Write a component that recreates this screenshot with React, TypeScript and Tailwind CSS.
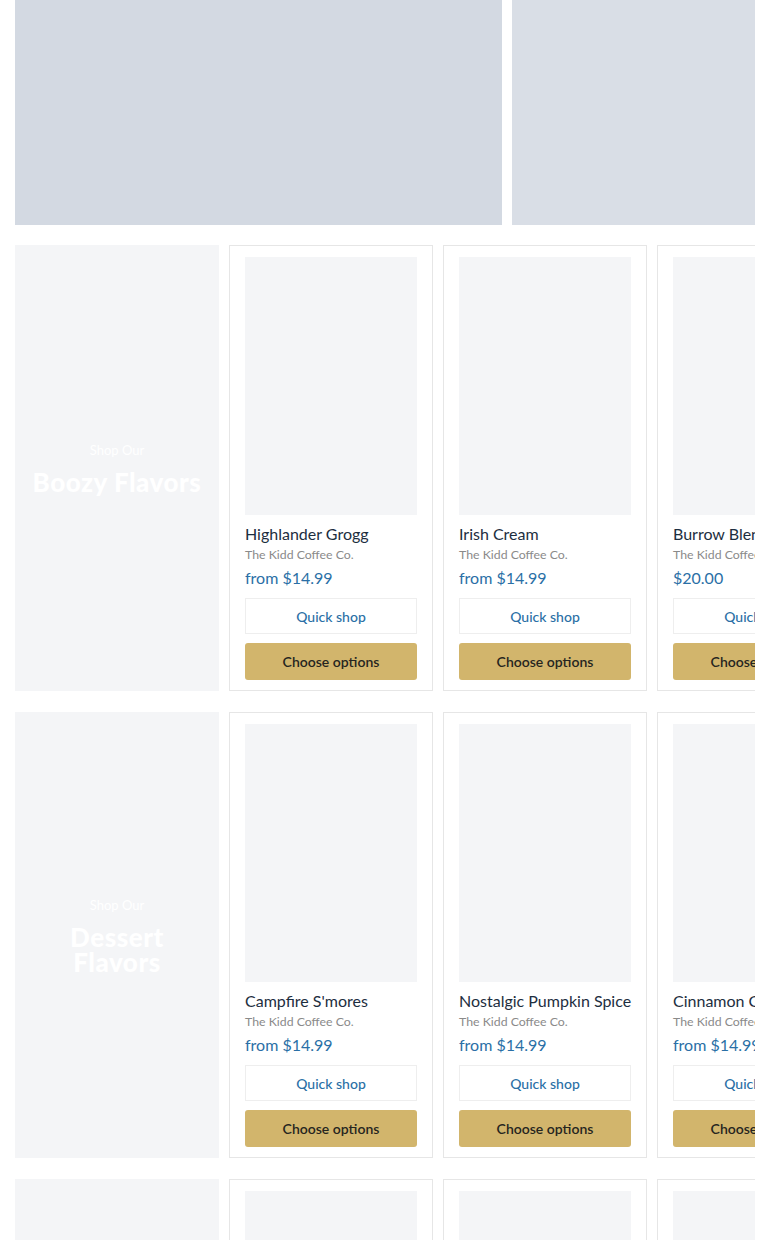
const font = { fontFamily: 'Lato, "Noto Sans", sans-serif' };

type Product = { title: string; price: string };

const rows: { heading: string; products: Product[] }[] = [
  {
    heading: 'Boozy Flavors',
    products: [
      { title: 'Highlander Grogg', price: 'from $14.99' },
      { title: 'Irish Cream', price: 'from $14.99' },
      { title: 'Burrow Blend', price: '$20.00' },
    ],
  },
  {
    heading: 'Dessert Flavors',
    products: [
      { title: "Campfire S'mores", price: 'from $14.99' },
      { title: 'Nostalgic Pumpkin Spice', price: 'from $14.99' },
      { title: 'Cinnamon Coffee Cake', price: 'from $14.99' },
    ],
  },
  {
    heading: 'Fruity Flavors',
    products: [
      { title: 'Blueberry Cobbler', price: 'from $14.99' },
      { title: 'Raspberry Truffle', price: 'from $14.99' },
      { title: 'Georgia Peach', price: 'from $14.99' },
    ],
  },
];

function ProductCard({ product }: { product: Product }) {
  return (
    <div className="w-[204px] shrink-0 border border-[#e6e6e6] bg-white px-[15px] pt-[11px] pb-[10px]">
      <div className="h-[258px] bg-[#f4f5f7]" />
      <div className="mt-[9px] text-[16px] leading-[20px] text-[#1d2e40] whitespace-nowrap">{product.title}</div>
      <div className="mt-[3px] text-[12.3px] leading-[15px] text-[#8a8a8a] whitespace-nowrap">The Kidd Coffee Co.</div>
      <div className="mt-[6px] text-[16px] leading-[20px] text-[#2a6fa6] whitespace-nowrap">{product.price}</div>
      <button className="mt-[10px] flex h-[36px] w-full items-center justify-center border border-[#eeeeee] bg-white text-[14px] font-medium text-[#2a6fa6] whitespace-nowrap">
        Quick shop
      </button>
      <button className="mt-[9px] flex h-[37px] w-full items-center justify-center rounded-[3px] bg-[#d2b56c] text-[14px] font-semibold text-[#26251f] whitespace-nowrap">
        Choose options
      </button>
    </div>
  );
}

export default function App() {
  return (
    <div className="min-h-[1240px] bg-white px-[15px]" style={font}>
      <div className="overflow-hidden">
        <div className="flex gap-[10px]">
          <div className="h-[225px] w-[487px] shrink-0 bg-[#d3d9e2]" />
          <div className="h-[225px] w-[487px] shrink-0 bg-[#d9dee6]" />
        </div>
        <div className="mt-[20px] flex flex-col gap-[21px]">
          {rows.map((row) => (
            <div key={row.heading} className="flex gap-[10px]">
              <div className="flex w-[204px] shrink-0 flex-col items-center justify-center bg-[#f4f5f7] px-[10px] text-center text-white">
                <div className="text-[13px] leading-[18px]">Shop Our</div>
                <div className="mt-[11px] text-[26px] font-black leading-[25px] tracking-[0.02em]">{row.heading}</div>
              </div>
              {row.products.map((p) => (
                <ProductCard key={p.title} product={p} />
              ))}
            </div>
          ))}
        </div>
      </div>
    </div>
  );
}
